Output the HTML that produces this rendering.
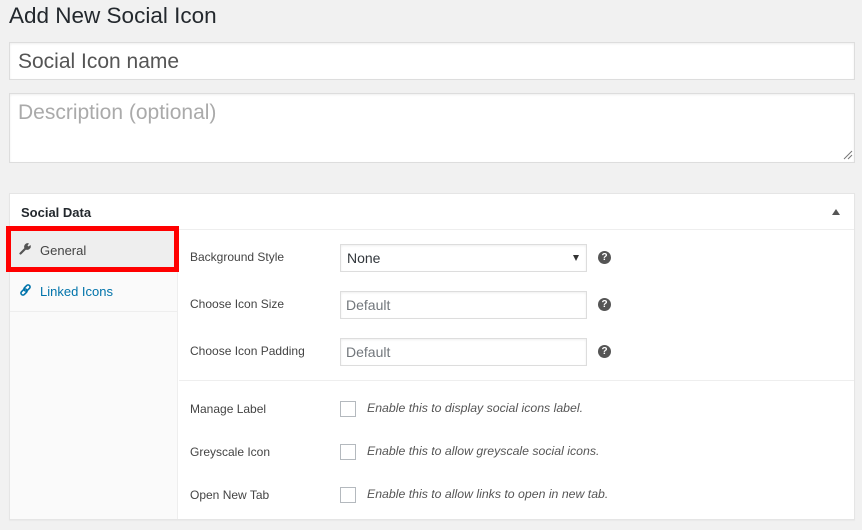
<!DOCTYPE html>
<html><head><style>
*{box-sizing:border-box;margin:0;padding:0}
body{width:862px;height:530px;background:#f1f1f1;font-family:"Liberation Sans",sans-serif;color:#23282d;position:relative;overflow:hidden}
.a{position:absolute}
.inp{position:absolute;background:#fff;border:1px solid #ddd;box-shadow:inset 0 1px 2px rgba(0,0,0,.07)}
.lbl{position:absolute;left:190px;font-size:12px;color:#444}
.help{position:absolute;left:598px;width:13px;height:13px;border-radius:50%;background:#555;color:#fff;font-size:10px;font-weight:bold;text-align:center;line-height:13px}
.cb{position:absolute;left:340px;width:16px;height:16px;border:1px solid #b4b9be;background:#fff}
.desc{position:absolute;left:367px;font-size:12.3px;font-style:italic;color:#555}
</style></head><body>
<div class="a" style="left:9px;top:3px;font-size:22.5px;color:#23282d">Add New Social Icon</div>
<div class="inp" style="left:9px;top:42px;width:846px;height:38px"></div>
<div class="a" style="left:18px;top:50px;font-size:21px;color:#555">Social Icon name</div>
<div class="inp" style="left:9px;top:93px;width:846px;height:70px"></div>
<div class="a" style="left:18px;top:101px;font-size:21px;color:#aaa">Description (optional)</div>
<svg class="a" style="left:843px;top:150px" width="10" height="10"><path d="M9 1L1 9M9 5L5 9" stroke="#777" stroke-width="1"/></svg>

<div class="a" style="left:9px;top:193px;width:846px;height:327px;background:#fff;border:1px solid #e5e5e5;box-shadow:0 1px 1px rgba(0,0,0,.04)"></div>
<div class="a" style="left:21px;top:205px;font-size:13px;font-weight:bold">Social Data</div>
<div class="a" style="left:832px;top:209px;width:0;height:0;border-left:4px solid transparent;border-right:4px solid transparent;border-bottom:6px solid #555"></div>
<div class="a" style="left:10px;top:229px;width:844px;height:1px;background:#eee"></div>
<div class="a" style="left:10px;top:230px;width:168px;height:289px;background:#fafafa;border-right:1px solid #eee"></div>
<div class="a" style="left:10px;top:230px;width:168px;height:40px;background:#eee"></div>
<div class="a" style="left:10px;top:311px;width:168px;height:1px;background:#eee"></div>
<div class="a" style="left:6px;top:226px;width:173px;height:46px;border:5px solid #f00"></div>
<svg class="a" style="left:19px;top:242px" width="13" height="13" viewBox="0 0 13 13"><path d="M1.5 11.5L7 6" stroke="#555" stroke-width="2.2" stroke-linecap="round"/><path d="M6 7 A3.5 3.5 0 0 1 10 1.5 L8.5 3.5 L9.5 4.5 L11.5 3 A3.5 3.5 0 0 1 6 7Z" fill="#555"/></svg>
<div class="a" style="left:40px;top:243px;font-size:13px;color:#444">General</div>
<svg class="a" style="left:20px;top:284px" width="12" height="12" viewBox="0 0 12 12"><g stroke="#0073aa" stroke-width="1.6" fill="none"><rect x="5" y="0.5" width="4" height="7" rx="2" transform="rotate(45 7 4)"/><rect x="2" y="4.5" width="4" height="7" rx="2" transform="rotate(45 4 8)"/></g></svg>
<div class="a" style="left:40px;top:284px;font-size:13px;color:#0073aa">Linked Icons</div>

<div class="lbl" style="top:250px">Background Style</div>
<div class="inp" style="left:340px;top:244px;width:247px;height:28px"></div>
<div class="a" style="left:347px;top:250px;font-size:14px;color:#32373c">None</div>
<div class="a" style="left:573px;top:255px;width:0;height:0;border-left:3px solid transparent;border-right:3px solid transparent;border-top:6px solid #333"></div>
<div class="help" style="top:251px">?</div>

<div class="lbl" style="top:297px">Choose Icon Size</div>
<div class="inp" style="left:340px;top:291px;width:247px;height:28px"></div>
<div class="a" style="left:346px;top:297px;font-size:14px;color:#72777c">Default</div>
<div class="help" style="top:298px">?</div>

<div class="lbl" style="top:344px">Choose Icon Padding</div>
<div class="inp" style="left:340px;top:338px;width:247px;height:28px"></div>
<div class="a" style="left:346px;top:344px;font-size:14px;color:#72777c">Default</div>
<div class="help" style="top:345px">?</div>

<div class="a" style="left:179px;top:380px;width:675px;height:1px;background:#eee"></div>

<div class="lbl" style="top:402px">Manage Label</div>
<div class="cb" style="top:401px"></div>
<div class="desc" style="top:401px">Enable this to display social icons label.</div>
<div class="lbl" style="top:445px">Greyscale Icon</div>
<div class="cb" style="top:444px"></div>
<div class="desc" style="top:444px">Enable this to allow greyscale social icons.</div>
<div class="lbl" style="top:488px">Open New Tab</div>
<div class="cb" style="top:487px"></div>
<div class="desc" style="top:487px">Enable this to allow links to open in new tab.</div>
</body></html>
